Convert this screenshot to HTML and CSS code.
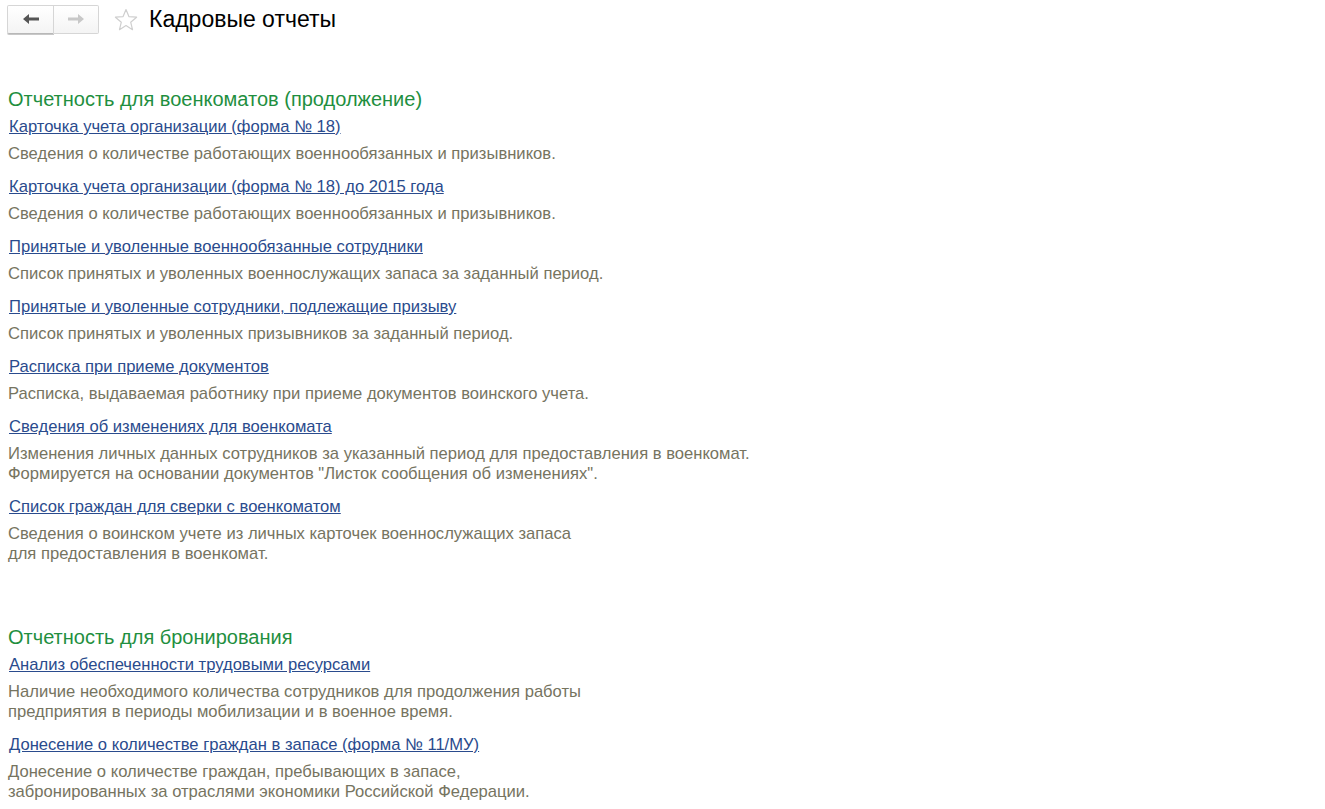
FILE: index.html
```html
<!DOCTYPE html>
<html lang="ru">
<head>
    <meta charset="UTF-8">
    <title>Кадровые отчеты</title>
    <link rel="stylesheet" href="styles.css">
</head>
<body>
    <div class="toolbar">
        <div class="nav">
            <button class="nav-btn back" title="Назад">
                <svg width="16" height="10" viewBox="0 0 16 10"><path d="M0 5 L6 0 L6 3.5 L16 3.5 L16 6.5 L6 6.5 L6 10 Z" fill="#555"/></svg>
            </button>
            <button class="nav-btn fwd" title="Вперед">
                <svg width="16" height="10" viewBox="0 0 16 10"><path d="M16 5 L10 0 L10 3.5 L0 3.5 L0 6.5 L10 6.5 L10 10 Z" fill="#c8c8c8"/></svg>
            </button>
        </div>
        <svg class="star" width="24" height="24" viewBox="0 0 24 24"><path d="M12 1.5 L14.9 8.6 L22.6 9.2 L16.7 14.2 L18.5 21.7 L12 17.6 L5.5 21.7 L7.3 14.2 L1.4 9.2 L9.1 8.6 Z" fill="none" stroke="#cfcfcf" stroke-width="1.2" stroke-linejoin="round"/></svg>
        <h1>Кадровые отчеты</h1>
    </div>

    <div class="content">
        <div class="section">
            <h2>Отчетность для военкоматов (продолжение)</h2>
            <div class="item">
                <a href="#">Карточка учета организации (форма № 18)</a>
                <p>Сведения о количестве работающих военнообязанных и призывников.</p>
            </div>
            <div class="item">
                <a href="#">Карточка учета организации (форма № 18) до 2015 года</a>
                <p>Сведения о количестве работающих военнообязанных и призывников.</p>
            </div>
            <div class="item">
                <a href="#">Принятые и уволенные военнообязанные сотрудники</a>
                <p>Список принятых и уволенных военнослужащих запаса за заданный период.</p>
            </div>
            <div class="item">
                <a href="#">Принятые и уволенные сотрудники, подлежащие призыву</a>
                <p>Список принятых и уволенных призывников за заданный период.</p>
            </div>
            <div class="item">
                <a href="#">Расписка при приеме документов</a>
                <p>Расписка, выдаваемая работнику при приеме документов воинского учета.</p>
            </div>
            <div class="item">
                <a href="#">Сведения об изменениях для военкомата</a>
                <p>Изменения личных данных сотрудников за указанный период для предоставления в военкомат.<br>Формируется на основании документов "Листок сообщения об изменениях".</p>
            </div>
            <div class="item">
                <a href="#">Список граждан для сверки с военкоматом</a>
                <p>Сведения о воинском учете из личных карточек военнослужащих запаса<br>для предоставления в военкомат.</p>
            </div>
        </div>

        <div class="section">
            <h2>Отчетность для бронирования</h2>
            <div class="item">
                <a href="#">Анализ обеспеченности трудовыми ресурсами</a>
                <p>Наличие необходимого количества сотрудников для продолжения работы<br>предприятия в периоды мобилизации и в военное время.</p>
            </div>
            <div class="item">
                <a href="#">Донесение о количестве граждан в запасе (форма № 11/МУ)</a>
                <p>Донесение о количестве граждан, пребывающих в запасе,<br>забронированных за отраслями экономики Российской Федерации.</p>
            </div>
        </div>
    </div>
</body>
</html>
```

FILE: styles.css
```css
body {
    margin: 0;
    font-family: "Liberation Sans", Arial, sans-serif;
    background: #fff;
    color: #333;
}
.toolbar {
    display: flex;
    align-items: center;
    height: 38px;
    padding: 0 7px;
}
.nav {
    display: flex;
}
.nav-btn {
    width: 47px;
    height: 29px;
    margin: 0;
    padding: 0;
    border: 1px solid #d6d6d6;
    background: linear-gradient(#ffffff, #f4f4f4);
    display: flex;
    align-items: center;
    justify-content: center;
}
.nav-btn.back {
    border-radius: 2px 0 0 2px;
    border-bottom-color: #b8b8b8;
    box-shadow: 0 1px 0 #c8c8c8;
}
.nav-btn.fwd {
    border-left: none;
    border-radius: 0 2px 2px 0;
    width: 45px;
}
.star {
    margin-left: 15px;
    margin-top: 2px;
}
h1 {
    margin: 0 0 0 11px;
    font-size: 23px;
    font-weight: normal;
    color: #000;
}
.content {
    padding: 49px 8px 0;
}
.section {
    margin-bottom: 61px;
}
h2 {
    margin: 0 0 6px;
    font-size: 20px;
    line-height: 24px;
    font-weight: normal;
    color: #1f8f3f;
}
.item {
    margin-bottom: 13px;
}
.item a {
    display: inline-block;
    margin-left: 1px;
    font-size: 16.6px;
    line-height: 20px;
    color: #2a4b8d;
    text-decoration: underline;
}
.item p {
    margin: 7px 0 0;
    font-size: 16.6px;
    line-height: 20px;
    color: #76745f;
}
```
